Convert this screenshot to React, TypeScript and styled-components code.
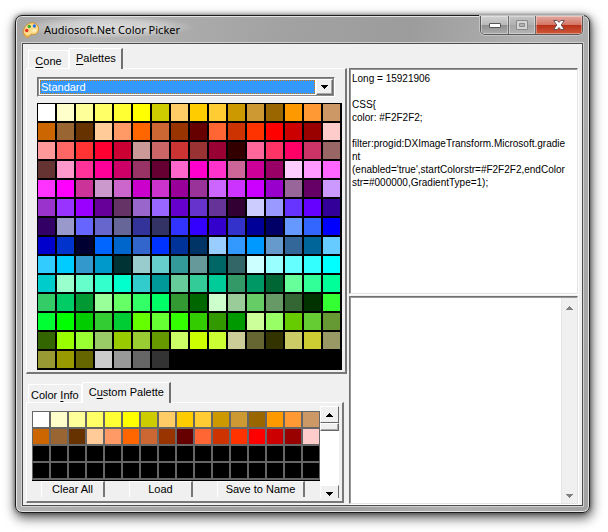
import React from "react";
import styled, { createGlobalStyle } from "styled-components";

const Global = createGlobalStyle`
  * { box-sizing: border-box; }
  body {
    margin: 0;
    background: #fff;
    color: #000;
    font: 11px/13px "Liberation Sans", Arial, sans-serif;
  }
  button, select, textarea { font: inherit; color: inherit; margin: 0; border-radius: 0; }
`;

const Desktop = styled.div`
  display: flex;
  min-height: 100vh;
  padding: 15px 18px 19px 15px;
`;

const Window = styled.main`
  flex: 1;
  min-width: 0;
  display: flex;
  flex-direction: column;
  border: 1px solid #1c1c1c;
  border-radius: 7px;
  padding: 0 6px 6px;
  background: linear-gradient(100deg, #a4a4a4, #b4b4b4 12%, #a2a2a2 40%, #9c9c9c 60%, #b2b2b2 80%, #a2a2a2);
  box-shadow:
    inset 0 0 0 1px #e4e4e4,
    0 0 4px rgba(0, 0, 0, 0.5),
    1px 4px 12px 1px rgba(0, 0, 0, 0.65);
`;

const TitleBar = styled.header`
  display: flex;
  align-items: flex-start;
  justify-content: space-between;
  height: 27px;
`;

const Title = styled.h1`
  display: flex;
  align-items: center;
  gap: 5px;
  margin: 0;
  padding: 6px 14px 0 1px;
  font: 11px/16px "Noto Sans", "Open Sans", sans-serif;
  background: radial-gradient(closest-side, rgba(225, 225, 225, 0.9), rgba(215, 215, 215, 0.7) 60%, transparent);
`;

const Controls = styled.div`
  display: flex;
  height: 19px;
  border: 1px solid #5a5a5a;
  border-top: 0;
  border-radius: 0 0 5px 5px;
  overflow: hidden;
  box-shadow: 0 0 0 1px #c4c4c4;
`;

const Control = styled.button<{ $kind?: "close" | "off" }>`
  display: flex;
  align-items: center;
  justify-content: center;
  width: ${(p) => (p.$kind === "close" ? 47 : 27)}px;
  padding: 0;
  border: 0;
  border-left: ${(p) => (p.$kind ? "1px solid #6c6c6c" : "0")};
  background: ${(p) =>
    p.$kind === "close"
      ? "linear-gradient(#e3a99f, #d47666 48%, #b92f18 50%, #cf5a3a)"
      : p.$kind === "off"
        ? "linear-gradient(#c4c4c4, #b0b0b0 48%, #a4a4a4 50%, #b4b4b4)"
        : "linear-gradient(#d2d2d2, #b8b8b8 48%, #8e8e8e 50%, #acacac)"};
  box-shadow: inset 0 0 0 1px rgba(255, 255, 255, 0.35);
`;

const Client = styled.div`
  flex: 1;
  display: grid;
  grid-template-columns: auto minmax(0, 1fr);
  gap: 2px;
  padding: 4px 4px 1px 3px;
  border: 1px solid #4c4c4c;
  background: #f0f0f0;
  box-shadow: 0 0 0 1px #d0d0d0;
`;

const Left = styled.div`
  display: flex;
  flex-direction: column;
  align-items: flex-start;
  gap: 8px;
`;

const Right = styled.div`
  display: grid;
  grid-template-rows: 13fr 12fr;
  gap: 2px;
  padding-top: 20px;
`;

const TabList = styled.div`
  display: flex;
  align-items: flex-end;
  padding-left: 2px;
`;

const Tab = styled.button<{ $active?: boolean }>`
  min-width: 41px;
  height: ${(p) => (p.$active ? 21 : 18)}px;
  padding: ${(p) => (p.$active ? "0 5px 1px 6px" : "3px 2px 0")};
  margin-bottom: ${(p) => (p.$active ? -1 : 0)}px;
  border: 1px solid #fff;
  border-bottom: 0;
  border-right: ${(p) => (p.$active ? "2px solid #707070" : "1px solid #fff")};
  background: #f0f0f0;
  white-space: nowrap;
`;

const Mnemonic = styled.span`
  text-decoration: underline;
  text-underline-offset: 2px;
`;

const Panel = styled.section`
  border: 1px solid #fff;
  border-right: 2px solid #777;
  border-bottom: 2px solid #777;
`;

const PalettePanel = styled(Panel)`
  padding: 8px 3px 2px 10px;
`;

const CustomPanel = styled(Panel)`
  display: flex;
  padding: 3px 3px 3px 5px;
`;

const Combo = styled.div`
  display: flex;
  height: 20px;
  margin: 0 7px 6px 0;
  padding: 1px;
  border: 1px solid;
  border-color: #707070 #fff #fff #707070;
  box-shadow: inset 0 0 0 1px #8c8c8c;
  background: #fff;
`;

const ComboSelect = styled.select`
  appearance: none;
  flex: 1;
  min-width: 0;
  margin: 1px;
  padding: 0;
  border: 1px dotted #d87800;
  outline: 0;
  background: #3399ff;
  color: #fff;
`;

const Raised = styled.button`
  display: flex;
  align-items: center;
  justify-content: center;
  padding: 0;
  border: 1px solid;
  border-color: #fff #696969 #696969 #fff;
  box-shadow: inset -1px -1px 0 #a8a8a8;
  background: #f0f0f0;
`;

const ComboArrow = styled(Raised)`
  width: 17px;
`;

const Swatches = styled.div`
  display: grid;
  grid-template-columns: repeat(16, 17px);
  grid-auto-rows: 17px;
  gap: 2px;
  padding: 1px 2px 2px 1px;
  background: #000;
`;

const CustomSwatches = styled.div`
  display: grid;
  grid-template-columns: repeat(16, 16px);
  grid-auto-rows: 15px;
  gap: 2px;
  margin-top: 5px;
  padding: 1px 1px 2px;
  border-bottom: 1px solid #000;
  background: #666;
`;

const Swatch = styled.button<{ $color: string }>`
  padding: 0;
  border: 0;
  background: ${(p) => p.$color};
`;

const Actions = styled.div`
  display: flex;
  gap: 24px;
  padding: 0 0 1px 9px;
`;

const Action = styled.button<{ $wide?: boolean }>`
  width: ${(p) => (p.$wide ? 88 : 64)}px;
  height: 16px;
  padding: 0;
  border: 1px solid #fff;
  border-bottom: 0;
  border-right: 2px solid #777;
  background: #f0f0f0;
  white-space: nowrap;
`;

const Scroller = styled.div`
  display: flex;
  flex-direction: column;
  width: 19px;
  background: #fff;
`;

const ScrollThumb = styled(Raised)`
  height: 8px;
  margin-bottom: auto;
`;

const ScrollArrow = styled(Raised)<{ $down?: boolean }>`
  height: ${(p) => (p.$down ? 13 : 17)}px;
  padding-top: ${(p) => (p.$down ? 4 : 0)}px;
  border-bottom: ${(p) => (p.$down ? "0" : "1px solid #696969")};
  box-shadow: none;
`;

const Field = styled.div`
  display: flex;
  border: 1px solid;
  border-color: #707070 #e3e3e3 #e3e3e3 #707070;
  box-shadow: inset 1px 1px 0 #969696, 1px 1px 0 #fff;
  background: #fff;
`;

const FieldText = styled.textarea`
  flex: 1;
  min-width: 0;
  margin: 1px 0 0 1px;
  padding: 2px 0 0 1px;
  border: 0;
  outline: 0;
  resize: none;
  overflow: hidden;
  font-size: 10px;
  white-space: pre;
  background: transparent;
`;

const FieldScroll = styled.div`
  display: flex;
  flex-direction: column;
  justify-content: space-between;
  width: 16px;
  margin-top: 1px;
  border-left: 1px solid #e6e6e6;
  background: #f0f0f0;
`;

const FieldScrollButton = styled.button`
  height: 17px;
  padding: 0;
  border: 0;
  background: transparent;
  color: #808080;
`;

const Arrow = ({ down }: { down?: boolean }) => (
  <svg width="7" height="4" viewBox="0 0 7 4" fill="currentColor" shapeRendering="crispEdges" aria-hidden>
    {down ? <path d="M0 0h7v1H6v1H5v1H4v1H3V3H2V2H1V1H0z" /> : <path d="M3 0h1v1h1v1h1v1h1v1H0V3h1V2h1V1h1z" />}
  </svg>
);

const PaletteIcon = () => (
  <svg width="16" height="16" viewBox="0 0 16 16" aria-hidden>
    <path
      d="M10 .8C5 .4.8 4.800.6 9.400c-.1 3.800 2 6.200 4.400 5.900 2-.3 1.500-2.500 3.100-3 1.500-.5 2.300.6 4.100 0 2.300-.8 3.600-3.300 3.400-6C15.300 3.300 13.300 1.100 10 .8z"
      fill="#fbdc8c"
      stroke="#d0902c"
    />
    <path d="M2 12.500c.8 2 3.200 2.300 4.100.8" stroke="#e8a840" strokeWidth="1.200" fill="none" />
    <circle cx="3.800" cy="8.500" r="1.700" fill="#e8301c" />
    <circle cx="6.300" cy="4.500" r="1.700" fill="#3cac30" />
    <circle cx="11.400" cy="4" r="1.700" fill="#2f6fe8" />
    <ellipse cx="11.300" cy="8.600" rx="2" ry="1.500" fill="#fff0c0" />
  </svg>
);

const MinimizeIcon = () => (
  <svg width="12" height="5" viewBox="0 0 12 5" aria-hidden>
    <rect x=".5" y=".5" width="11" height="4" rx=".5" fill="#fff" stroke="#555" />
  </svg>
);

const MaximizeIcon = () => (
  <svg width="12" height="10" viewBox="0 0 12 10" aria-hidden>
    <path d="M.5.5h11v9H.5z" fill="#d4d4d4" stroke="#8a8a8a" />
    <path d="M3.500 3.500h5v3h-5z" fill="#b2b2b2" stroke="#8a8a8a" />
  </svg>
);

const CloseIcon = () => (
  <svg width="12" height="10" viewBox="0 0 12 10" aria-hidden>
    <path
      d="M.7.5h3.500L6 2.400 7.800.5h3.500L8.200 5l3.100 4.500H7.800L6 7.600 4.200 9.500H.7L3.800 5z"
      fill="#fff"
      stroke="#5a4a50"
      strokeWidth=".9"
    />
  </svg>
);

const palette = `
FFFFFF FFFFCC FFFF99 FFFF66 FFFF33 FFFF00 CCCC00 FFCC66 FFCC00 FFCC33 CC9900 CC9933 996600 FF9900 FF9933 CC9966
CC6600 996633 663300 FFCC99 FF9966 FF6600 CC6633 993300 660000 FF6633 CC3300 FF3300 FF0000 CC0000 990000 FFCCCC
FF9999 FF6666 FF3333 FF0033 CC0033 CC9999 CC6666 CC3333 993333 990033 330000 FF6699 FF3366 FF0066 CC3366 996666
663333 FF99CC FF3399 FF0099 CC0066 993366 660033 FF66CC FF00CC FF33CC CC6699 CC0099 990066 FFCCFF FF99FF FF66FF
FF33FF FF00FF CC3399 CC99CC CC66CC CC00CC CC33CC 990099 993399 CC66FF CC33FF CC00FF 9900CC 996699 660066 CC99FF
9933CC 9933FF 9900FF 660099 663366 9966CC 9966FF 6600CC 6633CC 663399 330033 CCCCFF 9999FF 6633FF 6600FF 330099
330066 9999CC 6666FF 6666CC 666699 333399 333366 3333FF 3300FF 3300CC 3333CC 000099 000066 6699FF 3366FF 0000FF
0000CC 0033CC 000033 0066FF 0066CC 3366CC 0033FF 003399 003366 99CCFF 3399FF 0099FF 6699CC 336699 006699 66CCFF
33CCFF 00CCFF 3399CC 0099CC 003333 99CCCC 66CCCC 339999 669999 006666 336666 CCFFFF 99FFFF 66FFFF 33FFFF 00FFFF
00CCCC 99FFCC 66FFCC 33FFCC 00FFCC 33CCCC 009999 66CC99 33CC99 00CC99 339966 009966 006633 66FF99 33FF99 00FF99
33CC66 00CC66 009933 99FF99 66FF66 33FF66 00FF66 339933 006600 CCFFCC 99CC99 66CC66 669966 336633 003300 33FF33
00FF33 00FF00 00CC00 33CC33 00CC33 66FF00 66FF33 33FF00 33CC00 339900 009900 CCFF99 99FF66 66CC00 66CC33 669933
336600 99FF00 99FF33 99CC66 99CC00 99CC33 669900 CCFF66 CCFF00 CCFF33 CCCC99 666633 333300 CCCC66 CCCC33 999966
999933 999900 666600 CCCCCC 999999 666666 333333`
  .trim()
  .split(/\s+/)
  .map((hex) => `#${hex}`);

const customPalette = [...palette.slice(0, 32), ...Array<string>(32).fill("#000000")];

const cssOutput = `Long = 15921906

CSS{
color: #F2F2F2;

filter:progid:DXImageTransform.Microsoft.gradie
nt
(enabled='true',startColorstr=#F2F2F2,endColor
str=#000000,GradientType=1);`;

export default function App() {
  return (
    <Desktop>
      <Global />
      <Window>
        <TitleBar>
          <Title>
            <PaletteIcon />
            Audiosoft.Net Color Picker
          </Title>
          <Controls>
            <Control aria-label="Minimize"><MinimizeIcon /></Control>
            <Control $kind="off" aria-label="Maximize" disabled><MaximizeIcon /></Control>
            <Control $kind="close" aria-label="Close"><CloseIcon /></Control>
          </Controls>
        </TitleBar>
        <Client>
          <Left>
            <div>
              <TabList role="tablist">
                <Tab role="tab" aria-selected={false}><Mnemonic>C</Mnemonic>one</Tab>
                <Tab role="tab" aria-selected $active><Mnemonic>P</Mnemonic>alettes</Tab>
              </TabList>
              <PalettePanel>
                <Combo>
                  <ComboSelect aria-label="Palette" defaultValue="Standard">
                    <option>Standard</option>
                  </ComboSelect>
                  <ComboArrow tabIndex={-1} aria-label="Open palette list"><Arrow down /></ComboArrow>
                </Combo>
                <Swatches>
                  {palette.map((color) => (
                    <Swatch key={color} $color={color} aria-label={color} />
                  ))}
                </Swatches>
              </PalettePanel>
            </div>
            <div>
              <TabList role="tablist">
                <Tab role="tab" aria-selected={false}>Color <Mnemonic>I</Mnemonic>nfo</Tab>
                <Tab role="tab" aria-selected $active>C<Mnemonic>u</Mnemonic>stom Palette</Tab>
              </TabList>
              <CustomPanel>
                <div>
                  <CustomSwatches>
                    {customPalette.map((color, i) => (
                      <Swatch key={i} $color={color} aria-label={`Custom ${i + 1}`} />
                    ))}
                  </CustomSwatches>
                  <Actions>
                    <Action>Clear All</Action>
                    <Action>Load</Action>
                    <Action $wide>Save to Name</Action>
                  </Actions>
                </div>
                <Scroller>
                  <ScrollArrow aria-label="Scroll up"><Arrow /></ScrollArrow>
                  <ScrollThumb aria-label="Scroll position" />
                  <ScrollArrow $down aria-label="Scroll down"><Arrow down /></ScrollArrow>
                </Scroller>
              </CustomPanel>
            </div>
          </Left>
          <Right>
            <Field>
              <FieldText aria-label="Color code" defaultValue={cssOutput} spellCheck={false} />
            </Field>
            <Field>
              <FieldText aria-label="Notes" />
              <FieldScroll>
                <FieldScrollButton aria-label="Scroll notes up"><Arrow /></FieldScrollButton>
                <FieldScrollButton aria-label="Scroll notes down"><Arrow down /></FieldScrollButton>
              </FieldScroll>
            </Field>
          </Right>
        </Client>
      </Window>
    </Desktop>
  );
}
